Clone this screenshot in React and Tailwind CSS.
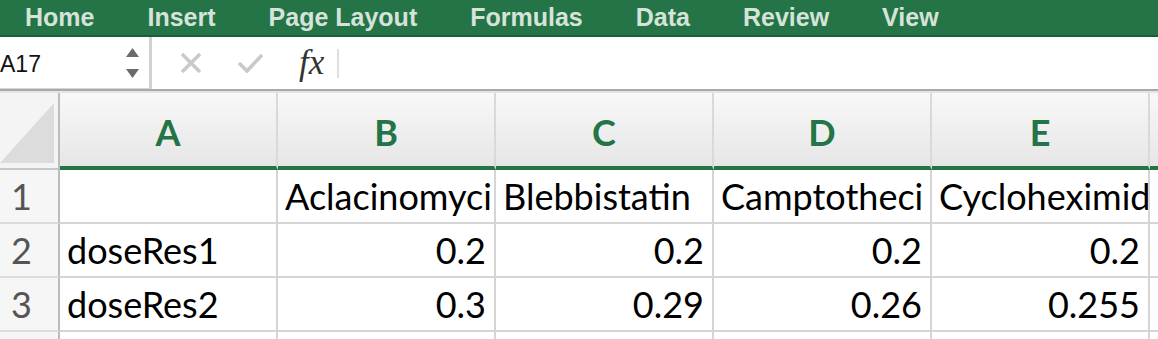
const tabs = ["Home", "Insert", "Page Layout", "Formulas", "Data", "Review", "View"];
const cols = ["A", "B", "C", "D", "E"];

const rows = [
  { n: "1", cells: [{ t: "" }, { t: "Aclacinomyci" }, { t: "Blebbistatin" }, { t: "Camptotheci" }, { t: "Cycloheximid" }] },
  { n: "2", cells: [{ t: "doseRes1" }, { t: "0.2", num: true }, { t: "0.2", num: true }, { t: "0.2", num: true }, { t: "0.2", num: true }] },
  { n: "3", cells: [{ t: "doseRes2" }, { t: "0.3", num: true }, { t: "0.29", num: true }, { t: "0.26", num: true }, { t: "0.255", num: true }] },
  // row 4 only peeks in at the bottom edge, its number is not visible
  { n: "", cells: [{ t: "" }, { t: "" }, { t: "" }, { t: "" }, { t: "" }] },
];

const cellFont = { fontFamily: "Lato, 'Open Sans', sans-serif" };

function Arrows() {
  return (
    <div className="flex flex-col gap-[12px]">
      <svg width="13" height="9" viewBox="0 0 13 9">
        <polygon points="6.5,0 13,9 0,9" fill="#6b6b6b" />
      </svg>
      <svg width="13" height="9" viewBox="0 0 13 9">
        <polygon points="0,0 13,0 6.5,9" fill="#6b6b6b" />
      </svg>
    </div>
  );
}

export default function App() {
  return (
    <div className="w-[1158px] h-[339px] overflow-hidden bg-white">
      {/* ribbon tabs */}
      <div
        className="h-[37px] bg-[#247447] border-b-2 border-[#1d5e3a] flex gap-[53px] pl-[25px] pt-[3px] text-[25px] leading-[28px] font-bold text-[#d6e3d9] whitespace-nowrap"
        style={{ fontFamily: "'Liberation Sans', Arial, sans-serif" }}
      >
        {tabs.map((t) => (
          <span key={t}>{t}</span>
        ))}
      </div>

      {/* formula bar */}
      <div className="h-[52px] flex items-center bg-white">
        <div className="w-[149px] h-full flex items-center justify-between pr-[10px] border-b border-[#d6d6d6]">
          <span
            className="text-[23px] text-[#111] pt-[4px]"
            style={{ fontFamily: "'Liberation Sans', Arial, sans-serif" }}
          >
            A17
          </span>
          <Arrows />
        </div>
        <div className="w-[3px] h-full bg-[#d2d2d2]" />
        <svg className="ml-[28px]" width="22" height="20" viewBox="0 0 22 20">
          <path d="M2 1 L20 19 M20 1 L2 19" stroke="#c9c9c9" strokeWidth="3.5" />
        </svg>
        <svg className="ml-[35px]" width="27" height="20" viewBox="0 0 27 20">
          <path d="M2 10 L10 18 L25 2" stroke="#c9c9c9" strokeWidth="3.5" fill="none" />
        </svg>
        <span
          className="ml-[35px] italic text-[35px] leading-none text-[#333] pb-[2px]"
          style={{ fontFamily: "'Liberation Serif', 'Times New Roman', serif" }}
        >
          fx
        </span>
        <div className="ml-[13px] w-[2px] h-[29px] bg-[#dedede]" />
      </div>
      <div className="h-[2px] bg-[#a9a9a9]" />
      <div className="h-[2px] bg-[#e4e4e4]" />

      {/* column headers */}
      <div className="flex h-[77px]">
        <div className="w-[60px] shrink-0 border-r-2 border-[#bcbcbc] bg-[#f4f4f4] flex flex-col">
          <div className="h-[73px] pt-[10px]">
            <svg width="56" height="61" viewBox="0 0 56 61">
              <polygon points="0,60 54,0 54,60" fill="#dcdcdc" />
            </svg>
          </div>
          <div className="h-[4px] border-b-2 border-[#c8c8c8] bg-[#f4f4f4]" />
        </div>
        {cols.map((c) => (
          <div
            key={c}
            className="w-[218px] shrink-0 border-r-2 border-[#d9d9d9] border-b-4 border-b-[#237447] bg-gradient-to-b from-[#f8f8f8] to-[#e6e6e6] flex items-center justify-center pt-[5px] text-[36px] font-bold text-[#237447]"
            style={cellFont}
          >
            {c}
          </div>
        ))}
        <div className="w-[40px] shrink-0 border-b-4 border-b-[#237447] bg-gradient-to-b from-[#f8f8f8] to-[#e6e6e6]" />
      </div>

      {/* rows */}
      {rows.map((r, ri) => (
        <div key={ri} className="flex h-[54px]" style={cellFont}>
          <div className="w-[60px] shrink-0 border-r-2 border-r-[#bcbcbc] border-b-2 border-b-[#dcdcdc] bg-[#f6f6f6] flex items-center pl-[11px] text-[36px] text-[#555]">
            {r.n}
          </div>
          {r.cells.map((c, i) => (
            <div
              key={i}
              className={`w-[218px] shrink-0 border-r-2 border-b-2 border-[#d5d5d5] overflow-hidden whitespace-nowrap flex items-center text-[36px] text-black ${
                c.num ? "justify-end pr-[8px]" : "pl-[7px]"
              }`}
            >
              {c.t}
            </div>
          ))}
          <div className="w-[40px] shrink-0 border-b-2 border-[#d5d5d5]" />
        </div>
      ))}
    </div>
  );
}
